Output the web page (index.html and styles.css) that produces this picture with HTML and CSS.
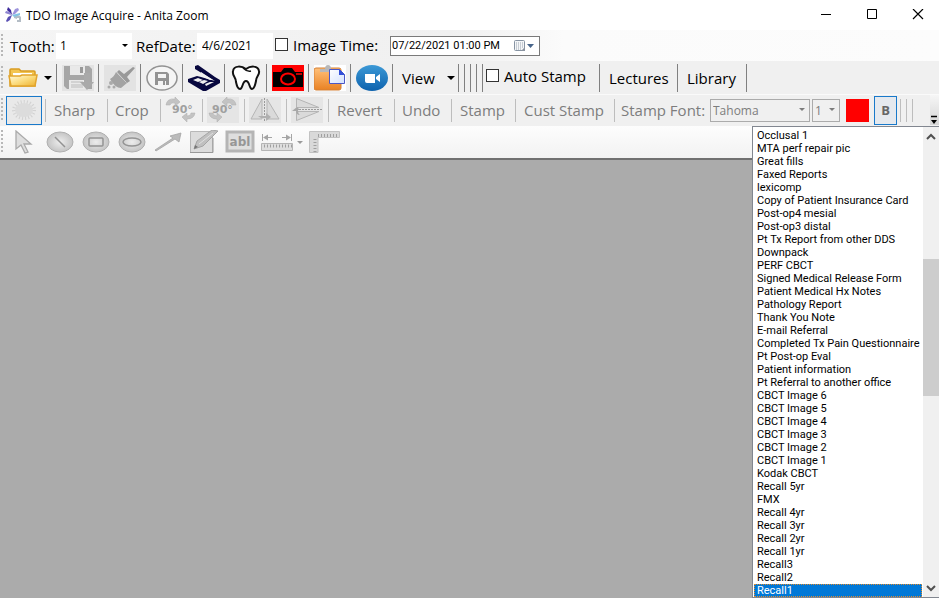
FILE: index.html
```html
<!DOCTYPE html>
<html lang="en">
<head>
<meta charset="utf-8">
<title>TDO Image Acquire - Anita Zoom</title>
<link rel="stylesheet" href="styles.css">
</head>
<body>
<header class="titlebar">
  <svg class="logo" width="16" height="16" viewBox="0 0 16 16"><path d="M7 8 2 3l1-3 3 3z" fill="#3f2c9c"/><path d="M6 8 0 6l1-2 4 1z" fill="#8d84d0"/><path d="M7 8 10 2l3-1 1 2-4 4z" fill="#9d94dc"/><path d="M7 8l-2 5-3 2-1-1 2-4z" fill="#5a50b4"/><path d="M9 10q1-2 3-2 3 0 4 2v5h-4v-3l-3-1z" fill="#b4bdc6"/><path d="M7 8l8-2v2l-6 2z" fill="#82c3e4"/><path d="M12 11h2v2h-2z" fill="#fff"/></svg>
  <h1>TDO Image Acquire - Anita Zoom</h1>
  <div class="window-buttons">
    <button aria-label="Minimize"><svg width="12" height="12"><path d="M1 5.500h10" stroke="#000"/></svg></button>
    <button aria-label="Maximize"><svg width="12" height="12"><path d="M1.500 .500h9v9h-9z" fill="none" stroke="#000"/></svg></button>
    <button aria-label="Close"><svg width="12" height="12"><path d="M1 0l10 10M11 0 1 10" stroke="#000" stroke-width="1.200"/></svg></button>
  </div>
</header>

<div class="bar info">
  <span class="grip"></span>
  <label class="tooth" for="tooth">Tooth:</label>
  <span class="combo flat"><select id="tooth"><option>1</option></select></span>
  <label class="ref" for="ref">RefDate:</label>
  <input class="refdate" id="ref" type="text" value="4/6/2021">
  <label class="check image-time"><input type="checkbox">Image Time:</label>
  <span class="datebox"><input type="text" aria-label="Image time" value="07/22/2021 01:00 PM"><button aria-label="Open calendar"><svg width="22" height="14"><rect x="1.500" y="1.500" width="10" height="10" rx="1" fill="#f4f6f8" stroke="#8794a3"/><path d="M3 4h7M3 6h7M3 8h7M3 10h5" stroke="#9aa4b0" stroke-dasharray="1 1"/><path d="M8 12l4-4v4z" fill="#8a93a0"/><path d="M14 5h7l-3.500 4z" fill="#47648a"/></svg></button></span>
</div>

<div class="bar main">
  <span class="grip"></span>
  <button class="folder" aria-label="Open"><svg width="30" height="20" viewBox="0 0 30 20"><defs><linearGradient id="gold" x2="1" y2="1"><stop stop-color="#fffbe0"/><stop offset=".5" stop-color="#fbdc7e"/><stop offset="1" stop-color="#edb02c"/></linearGradient></defs><path d="M2 18V2q0-1 1-1h8l2 2h13q1 0 1 1v14z" fill="#f3c552" stroke="#d99c22" stroke-width="1.500"/><path d="M5 5h19v3H5z" fill="#fff"/><path d="M1 8h11l2-1h15l-2 11H3z" fill="url(#gold)" stroke="#e2a52e" stroke-width="1.500"/></svg><i class="arrow"></i></button>
  <button class="tool" aria-label="Save"><svg width="32" height="26" viewBox="0 0 32 26"><path fill="#e3e3e3" d="M0 0h32v26H0z"/><path d="M2 1h25l3 3v20H5l-3-3z" fill="#a6a6a6"/><path d="M8 1h15v9H8zM7 15h19v9H7z" fill="#e9e9e9"/><path d="M18 2h3v6h-3z" fill="#999"/><path d="M9 17h12M9 20h12M9 22h12" stroke="#bbb"/><path d="M22 8h6v9h4l-7 8-7-8h4z" fill="#a9a9a9"/></svg></button>
  <button class="tool" aria-label="Clean"><svg width="32" height="26" viewBox="0 0 32 26"><path fill="#e3e3e3" d="M0 0h32v26H0z"/><path d="m20 9 9-7 2 1-8 9 3 4-3 2L13 7l2-2z" fill="#999"/><path d="M12 7l11 11-6 5q-6 0-11-9 4-2 6-7z" fill="#a3a3a3"/><path d="M14 9l8 8" stroke="#ccc"/><circle cx="7" cy="18" r="2" fill="#aaa"/><circle cx="5" cy="22" r="1.500" fill="#aaa"/><circle cx="10" cy="22" r="1.500" fill="#aaa"/></svg></button>
  <button class="tool" aria-label="Save copy"><svg width="32" height="26" viewBox="0 0 32 26"><ellipse cx="16" cy="13" rx="15" ry="12" fill="#f5f5f5" stroke="#929292" stroke-width="1.500"/><path d="M9 7h12l2 2v11H9z" fill="#939393"/><path d="M12 9h8v4h-8zM12 16h8v4h-8z" fill="#f3f3f3"/><path d="M17 16h2v4h-2z" fill="#939393"/></svg></button>
  <button class="tool" aria-label="Scan"><svg width="32" height="26" viewBox="0 0 32 26"><path d="M7 1l3-1 17 12 5 3v3l-14 8h-3L0 17v-3l9-3 4 1L27 16 7 4z" fill="#08083f"/><path d="M5 15l5-2 5 2-5 2z" fill="#f0f0f0"/><path d="M11 17l5-2 4 1-5 3z" fill="#f0f0f0"/><path d="M17 19l5-2 4 0-8 4z" fill="#f0f0f0"/><path d="M13 11l9 4h3L13 7z" fill="#f0f0f0"/></svg></button>
  <button class="tool" aria-label="Tooth"><svg width="32" height="26" viewBox="0 0 32 26"><path d="M16 4C12 1 4 0 3 6c-1 5 3 6 3 11 1 5 2 7 4 7 3 0 2-8 6-8s3 8 6 8c2 0 3-3 4-8 0-5 4-6 3-10C28 0 20 1 16 4z" fill="#fff" stroke="#111" stroke-width="2"/><path d="M13 3q4 4 8 3" fill="none" stroke="#111" stroke-width="1.500"/></svg></button>
  <button class="tool" aria-label="Camera"><svg width="32" height="26" viewBox="0 0 32 26"><path fill="#f00" d="M0 0h32v26H0z"/><path d="M1 7h8l3-4h8l3 4h8v15H1z"/><ellipse cx="16" cy="14" rx="7" ry="5.500" fill="none" stroke="#f00" stroke-width="2"/><path d="M24 9h6" stroke="#f00" stroke-width="1.500"/></svg></button>
  <button class="tool" aria-label="Paste"><svg width="32" height="26" viewBox="0 0 32 26"><defs><linearGradient id="board" x2="0" y2="1"><stop stop-color="#ffc078"/><stop offset="1" stop-color="#e98224"/></linearGradient><linearGradient id="sheet" x2="1" y2="1"><stop stop-color="#fff"/><stop offset="1" stop-color="#d4e2ff"/></linearGradient></defs><path fill="#fff" d="M0 0h32v26H0z"/><rect y="3" width="27" height="22" rx="2" fill="url(#board)" stroke="#d48037"/><path d="M6 7V4h5q0-4 3-4t3 4h4v3z" fill="#b8b8b8"/><path d="M15.500 4.500h10l5 5v9h-15z" fill="url(#sheet)" stroke="#4b57c5"/><path d="M25 4l6 6h-6z" fill="#3450d8"/></svg></button>
  <button class="tool" aria-label="Video"><svg width="32" height="26" viewBox="0 0 32 26"><defs><linearGradient id="sky" x2="0" y2="1"><stop stop-color="#3c99d6"/><stop offset="1" stop-color="#0d62ad"/></linearGradient></defs><ellipse cx="16" cy="13" rx="16" ry="13" fill="url(#sky)"/><path d="M9 9h10v9H11q-2 0-2-2zM20 12l4-3v8l-4-3z" fill="#fff"/></svg></button>
  <button class="text view">View<i class="arrow"></i></button>
  <span class="rule"></span><span class="rule"></span><span class="rule"></span><span class="rule"></span>
  <label class="check auto"><input type="checkbox">Auto Stamp</label>
  <button class="text lectures">Lectures</button>
  <button class="text library">Library</button>
  <span class="rule"></span>
</div>

<div class="bar edit">
  <span class="grip"></span>
  <button class="toggled" aria-label="Brightness"><svg width="26" height="22" viewBox="0 0 26 22"><ellipse cx="13" cy="11" rx="10" ry="8" fill="none" stroke="#d2d2d2" stroke-width="4" stroke-dasharray="1 2"/><ellipse cx="13" cy="11" rx="9" ry="7" fill="#dcdcdc"/></svg></button>
  <button class="cell sharp">Sharp</button>
  <button class="cell crop">Crop</button>
  <button class="cell pic" aria-label="Rotate right"><svg width="32" height="26" viewBox="0 0 32 26"><text x="7" y="16" class="deg">90°</text><path d="M1 8Q2 1 10 2V0l5 5-5 4V6Q6 5 5 8zM30 16q-1 6-8 6v3l-5-5 5-4v3q4 0 4-3z" fill="#c3c3c3" stroke="#acacac" stroke-width=".5"/></svg></button>
  <button class="cell pic" aria-label="Rotate left"><svg width="32" height="26" viewBox="0 0 32 26"><path fill="#e5e5e5" d="M0 0h32v26H0z"/><text x="5" y="16" class="deg">90°</text><path d="M29 8q-1-7-9-6V0l-5 5 5 4V6q4-1 5 2zM2 16q1 6 8 6v3l5-5-5-4v3q-4 0-4-3z" fill="#c3c3c3" stroke="#acacac" stroke-width=".5"/></svg></button>
  <button class="cell pic" aria-label="Flip horizontal"><svg width="32" height="26" viewBox="0 0 32 26"><path fill="#e5e5e5" d="M0 0h32v26H0z"/><path d="M13 2v20H2zM18 2v20h12z" fill="#dadada" stroke="#b5b5b5"/><path d="M15.500 1v24" stroke="#999" stroke-dasharray="2 1"/><path d="M9 19h8v-3l5 4-5 4v-3q-5 1-8-2z" fill="#b0b0b0"/></svg></button>
  <button class="cell pic" aria-label="Flip vertical"><svg width="32" height="26" viewBox="0 0 32 26"><path fill="#e5e5e5" d="M0 0h32v26H0z"/><path d="M5.500 1.500v9H28zM5.500 23.500v-9H28z" fill="#dadada" stroke="#b5b5b5"/><path d="M5 12.500h26" stroke="#999" stroke-dasharray="2 1"/><path d="M1 14l5-4 3 3H7q0 4 2 5-4 0-4-4z" fill="#a8a8a8"/></svg></button>
  <button class="cell revert">Revert</button>
  <button class="cell undo">Undo</button>
  <button class="cell stamp">Stamp</button>
  <button class="cell cust">Cust Stamp</button>
  <label class="cell font" for="font">Stamp Font:</label>
  <span class="combo boxed family"><select id="font" disabled><option>Tahoma</option></select></span>
  <span class="combo boxed size"><select aria-label="Font size" disabled><option>1</option></select></span>
  <button class="swatch" aria-label="Stamp color"></button>
  <button class="toggled bold">B</button>
  <span class="tick"></span><span class="tick"></span><span class="tick"></span>
  <button class="overflow" aria-label="More tools"><svg width="8" height="10"><path d="M1 1.500h6" stroke="#000" stroke-width="1.500"/><path d="M1 5h6L4 9z"/></svg></button>
</div>

<main class="workspace">
  <section class="stage">
    <div class="bar draw">
      <span class="grip"></span>
      <button aria-label="Select"><svg width="30" height="24" viewBox="0 0 30 24"><path d="M7 1v18l5-4 4 8 3-1-4-8h7z" fill="#dedede" stroke="#aaa" stroke-width="1.300"/></svg></button>
      <button aria-label="Line"><svg width="30" height="24" viewBox="0 0 30 24"><defs><radialGradient id="disc"><stop stop-color="#ededed"/><stop offset="1" stop-color="#c4c4c4"/></radialGradient></defs><ellipse cx="15" cy="12" rx="13" ry="10" fill="url(#disc)" stroke="#b0b0b0"/><path d="M10 7l10 10" stroke="#929292" stroke-width="1.500"/></svg></button>
      <button aria-label="Rectangle"><svg width="30" height="24" viewBox="0 0 30 24"><ellipse cx="15" cy="12" rx="13" ry="10" fill="url(#disc)" stroke="#b0b0b0"/><rect x="8" y="8" width="14" height="8" rx="1" fill="none" stroke="#949494" stroke-width="1.500"/></svg></button>
      <button aria-label="Ellipse"><svg width="30" height="24" viewBox="0 0 30 24"><ellipse cx="15" cy="12" rx="13" ry="10" fill="url(#disc)" stroke="#b0b0b0"/><ellipse cx="15" cy="12" rx="9" ry="4" fill="none" stroke="#949494" stroke-width="1.500"/></svg></button>
      <button aria-label="Arrow"><svg width="30" height="24" viewBox="0 0 30 24"><path d="M2 20 20 8l-3-2 11-3-2 9-4-3L3 21z" fill="#bbb" stroke="#a5a5a5" stroke-width=".8"/></svg></button>
      <button aria-label="Pencil"><svg width="30" height="24" viewBox="0 0 30 24"><path d="M1.500 1.500h22v21h-22z" fill="#dcdcdc" stroke="#b8b8b8"/><path d="M1 22.500h23V8" stroke="#999" fill="none"/><path d="M5 19l3-8L23 0l6 1-15 15z" fill="#c0c0c0" stroke="#a5a5a5"/><path d="M5 19l1-4 3 2z" fill="#757575"/><path d="M10 14 24 3" stroke="#e0e0e0"/></svg></button>
      <button aria-label="Text"><svg width="30" height="24" viewBox="0 0 30 24"><path d="M2 2h26v19H2z" fill="#dedede" stroke="#b5b5b5" stroke-width="3"/><text x="15" y="16" text-anchor="middle" class="abl">abl</text></svg></button>
      <button class="measure" aria-label="Measure"><svg width="32" height="24" viewBox="0 0 32 24"><path d="M1.500 4v7M30.500 4v7M3 7.500h8M21 7.500h8" stroke="#a5a5a5"/><path d="M2 7.500l5-3v6zM30 7.500l-5-3v6z" fill="#a5a5a5"/><path d="M.500 13.500h31v7H.500z" fill="#dedede" stroke="#b5b5b5"/><path d="M3 16h28" stroke="#a0a0a0" stroke-width="3" stroke-dasharray="1 2"/></svg><i class="arrow"></i></button>
      <button aria-label="Calibrate"><svg width="31" height="24" viewBox="0 0 31 24"><path d="M.500 1.500h30v6H9v15H.500z" fill="#d9d9d9" stroke="#c2c2c2"/><path d="M9 5.500h20" stroke="#a0a0a0" stroke-width="3" stroke-dasharray="1 2"/><path d="M6 9v13" stroke="#a0a0a0" stroke-width="3" stroke-dasharray="1 2"/></svg></button>
    </div>
    <div class="canvas"></div>
  </section>
  <aside class="templates">
    <select size="36" aria-label="Image description">
      <option>Occlusal 1</option><option>MTA perf repair pic</option><option>Great fills</option><option>Faxed Reports</option><option>lexicomp</option><option>Copy of Patient Insurance Card</option><option>Post-op4 mesial</option><option>Post-op3 distal</option><option>Pt Tx Report from other DDS</option><option>Downpack</option><option>PERF CBCT</option><option>Signed Medical Release Form</option><option>Patient Medical Hx Notes</option><option>Pathology Report</option><option>Thank You Note</option><option>E-mail Referral</option><option>Completed Tx Pain Questionnaire</option><option>Pt Post-op Eval</option><option>Patient information</option><option>Pt Referral to another office</option><option>CBCT Image 6</option><option>CBCT Image 5</option><option>CBCT Image 4</option><option>CBCT Image 3</option><option>CBCT Image 2</option><option>CBCT Image 1</option><option>Kodak CBCT</option><option>Recall 5yr</option><option>FMX</option><option>Recall 4yr</option><option>Recall 3yr</option><option>Recall 2yr</option><option>Recall 1yr</option><option>Recall3</option><option>Recall2</option><option selected>Recall1</option>
    </select>
    <div class="scroll">
      <button aria-label="Scroll up"><svg width="10" height="8"><path d="M1 6l4-4 4 4" fill="none" stroke="#505050" stroke-width="2"/></svg></button>
      <span class="track"></span><span class="thumb"></span><span class="track end"></span>
      <button aria-label="Scroll down"><svg width="10" height="8"><path d="M1 2l4 4 4-4" fill="none" stroke="#505050" stroke-width="2"/></svg></button>
    </div>
  </aside>
</main>
</body>
</html>
```
FILE: styles.css
```css
* { box-sizing: border-box; }
body {
  margin: 0;
  height: 100vh;
  display: flex;
  flex-direction: column;
  overflow: hidden;
  background: #fff;
  color: #000;
  font: 15px "Open Sans", sans-serif;
}
button, input, select { font: inherit; color: inherit; margin: 0; border: 0; padding: 0; background: none; border-radius: 0; }
button { display: flex; align-items: center; white-space: nowrap; flex: none; }
label, span { flex: none; white-space: nowrap; }
svg { display: block; flex: none; }

.titlebar { display: flex; align-items: center; height: 30px; padding-left: 5px; flex: none; }
.titlebar h1 { margin: 0 auto 0 5px; font-size: 12px; font-weight: 400; }
.window-buttons { display: flex; margin-right: -2px; }
.window-buttons button { width: 46px; height: 28px; justify-content: center; }

.bar { display: flex; align-items: center; flex: none; background: #f0f0f0; }
.grip {
  width: 2px; height: 24px; margin: 0 4px 0 1px;
  background: repeating-linear-gradient(#b8b8b8 0 2px, transparent 2px 4px);
}
.arrow { border: 4px solid transparent; border-top-color: currentColor; border-bottom: 0; }

.info { height: 31px; background: linear-gradient(90deg, #f5f5f5, #f0f0f0 48%, #fbfbfb 60%, #fcfcfc); }
.tooth { width: 47px; padding-left: 3px; }
.ref { width: 65px; padding-left: 4px; }
.combo { position: relative; display: flex; }
.combo select { width: 100%; appearance: none; opacity: 1; }
.combo::after {
  content: ""; position: absolute; right: 4px; top: 50%; margin-top: -2px;
  border: 3px solid transparent; border-top-color: currentColor; border-bottom: 0; pointer-events: none;
}
.flat { width: 76px; height: 26px; margin-left: 2px; background: #fff; font-size: 12px; }
.flat select { padding-left: 4px; }
.refdate { width: 76px; height: 26px; padding-left: 5px; background: #fff; font-size: 12px; }
.check { display: flex; align-items: center; }
.check input { appearance: none; width: 13px; height: 13px; border: 1px solid #333; background: #fff; }
.image-time { width: 115px; height: 28px; margin-right: 2px; padding-left: 2px; padding-bottom: 2px; gap: 5px; }
.datebox { display: flex; align-items: center; width: 150px; height: 20px; border: 1px solid #7a7a7a; background: #fff; }
.datebox input { flex: 1; min-width: 0; padding-left: 1px; font: 11px Roboto, sans-serif; }
.datebox button { margin-right: 4px; }

.main { height: 33px; }
.folder { width: 49px; padding-left: 1px; gap: 6px; }
.tool { width: 42px; height: 28px; justify-content: center; border-left: 1px solid #808080; }
.text, .rule, .auto { height: 28px; border-left: 1px solid #808080; }
.view { width: 66px; padding-left: 9px; gap: 12px; }
.rule { width: 6px; }
.auto { width: 117px; padding-left: 3px; padding-bottom: 4px; gap: 5px; }
.lectures { width: 78px; padding-left: 9px; }
.library { width: 69px; padding-left: 9px; }

.edit { height: 32px; padding-bottom: 1px; border-top: 1px solid #fafafa; color: #7d7d7d; }
.edit .grip, .draw .grip { margin-right: 3px; }
.toggled { width: 36px; height: 29px; justify-content: center; border: 1px solid #1979ca; background: #e9e9e9; }
.toggled + .cell { margin-left: 3px; }
.cell { height: 23px; display: flex; align-items: center; padding-left: 8px; border-left: 1px solid #bdbdbd; }
.sharp { width: 62px; }
.crop { width: 53px; padding-left: 7px; }
.pic { width: 42px; padding-left: 4px; }
.revert { width: 66px; }
.undo { width: 57px; padding-left: 7px; }
.stamp { width: 64px; }
.cust { width: 99px; }
.font { width: 96px; padding-left: 6px; }
.deg { font: bold 11px "DejaVu Sans", sans-serif; fill: #a0a0a0; }
.boxed { height: 23px; border: 1px solid #ababab; font-size: 12px; }
.boxed select { padding-left: 2px; }
.family { width: 100px; margin-right: 2px; }
.size { width: 28px; }
.swatch { width: 23px; height: 23px; margin: 0 5px 0 6px; background: #f00; }
.bold { width: 23px; margin-right: 3px; font-size: 13px; font-weight: 700; color: #666; background: #e5e9ee; }
.tick { width: 6px; height: 23px; border-left: 1px solid #bdbdbd; }
.overflow { align-self: stretch; width: 9px; margin-left: auto; align-items: flex-end; background: linear-gradient(#f6f6f6, #d5d5d5); }

.workspace { display: flex; flex: 1; min-height: 0; }
.stage { display: flex; flex-direction: column; flex: 1; min-width: 0; }
.draw { height: 34px; background: linear-gradient(#fdfdfd, #f2f2f2); border-bottom: 2px solid #707070; color: #9a9a9a; }
.draw button { width: 36px; padding-left: 3px; }
.draw .measure { width: 48px; gap: 4px; }
.draw .arrow { border-width: 3px; border-bottom: 0; }
.abl { font: bold 12px "DejaVu Sans", sans-serif; fill: #969696; }
.canvas { flex: 1; background: #ababab; }

.templates { display: flex; width: 187px; border: 1px solid #828790; border-right: 0; background: #fff; }
.templates select {
  flex: 1; min-width: 0; height: auto; padding: 2px 1px 0; overflow: hidden; outline: 0;
  font: 11px/13px Roboto, sans-serif; scrollbar-width: none;
}
.templates option { height: 13px; min-height: 13px; padding: 0 3px; line-height: 13px; color: #000; }
.templates option:checked { color: #fff; background: linear-gradient(#0078d7, #0078d7); outline: 1px dotted #e08a2c; outline-offset: -1px; }
.scroll { display: flex; flex-direction: column; width: 16px; background: #f0f0f0; }
.scroll button { height: 19px; justify-content: center; }
.track { flex: 113; }
.thumb { flex: 137; background: #cdcdcd; }
.end { flex: 182; }
```
